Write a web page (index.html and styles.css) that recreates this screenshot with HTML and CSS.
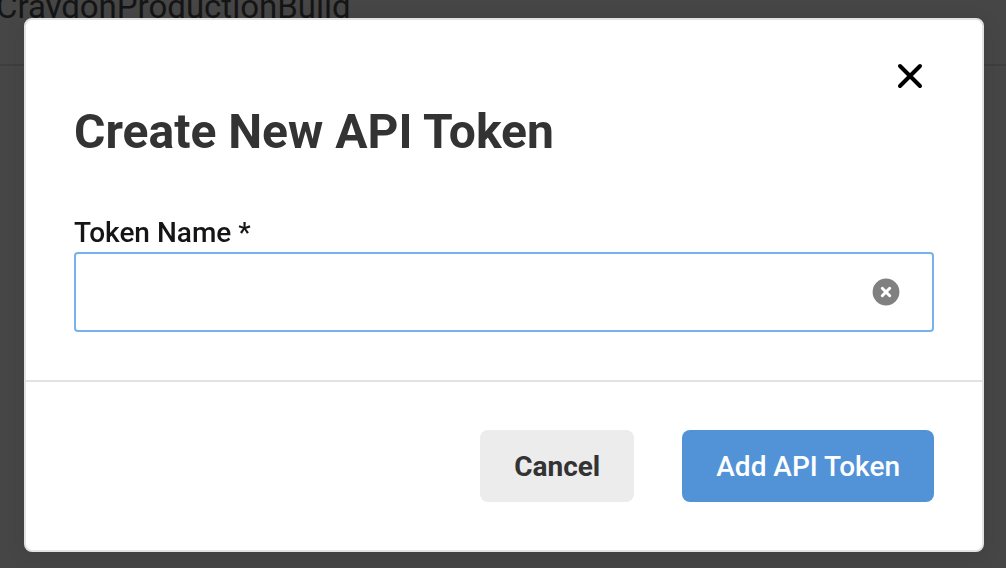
FILE: index.html
```html
<!DOCTYPE html>
<html lang="en">
<head>
<meta charset="utf-8">
<title>Create New API Token</title>
<link rel="stylesheet" href="styles.css">
</head>
<body>
<main class="page">
  <div class="page-row">CraydonProductionBuild</div>
</main>
<div class="overlay">
  <form class="dialog" role="dialog" aria-modal="true" aria-labelledby="dialog-title">
    <div class="dialog-body">
      <button class="close" type="button" aria-label="Close">
        <svg width="28" height="28" viewBox="0 0 28 28" fill="none" stroke="currentColor" stroke-width="4" stroke-linecap="round"><path d="M4 4 24 24M24 4 4 24"/></svg>
      </button>
      <h1 class="title" id="dialog-title">Create New API Token</h1>
      <label class="label" for="token-name">Token Name *</label>
      <div class="field">
        <input class="field-input" id="token-name" type="text" required>
        <button class="clear" type="button" aria-label="Clear token name">
          <svg width="28" height="28" viewBox="0 0 28 28"><circle cx="14" cy="14" r="13.4" fill="#808080"/><path d="M10.3 10.3 17.7 17.7M17.7 10.3 10.3 17.7" stroke="#fff" stroke-width="3" stroke-linecap="round"/></svg>
        </button>
      </div>
    </div>
    <div class="dialog-footer">
      <button class="button cancel" type="button">Cancel</button>
      <button class="button submit" type="submit">Add API Token</button>
    </div>
  </form>
</div>
</body>
</html>
```
FILE: styles.css
```css
* { box-sizing: border-box; }

body {
  margin: 0;
  background: #464646;
  color: #151515;
  font-family: Roboto, "Liberation Sans", sans-serif;
  overflow: hidden;
}

.page-row {
  height: 66px;
  margin: 0 0 0 -4px;
  border-bottom: 2px solid #3e3e3e;
  font-size: 33px;
  line-height: 14px;
  white-space: nowrap;
}

.overlay {
  position: fixed;
  inset: 0;
  padding: 18px 22px 16px 24px;
}

.dialog {
  background: #fff;
  border: 2px solid #e2e2e2;
  border-radius: 8px;
  box-shadow: 0 4px 20px rgba(0, 0, 0, 0.1);
}

.dialog-body {
  display: flex;
  flex-direction: column;
  padding: 42px 48px 48px;
  border-bottom: 2px solid #e2e2e2;
}

.close {
  display: flex;
  align-self: flex-end;
  margin-right: 10px;
  padding: 0;
  border: 0;
  background: none;
  color: #000;
}

.title {
  margin: 14px 0 56px;
  color: #333;
  font-size: 48px;
  font-weight: 700;
  line-height: 56px;
}

.label {
  margin-bottom: 2px;
  font-size: 28px;
  font-weight: 500;
  line-height: 34px;
}

.field {
  display: flex;
  align-items: center;
  height: 80px;
  padding: 0 32px;
  border: 2px solid #77b2ec;
  border-radius: 4px;
}

.field-input {
  flex: 1;
  min-width: 0;
  padding: 0;
  border: 0;
  outline: 0;
  background: none;
  font: inherit;
  font-size: 28px;
}

.clear {
  display: flex;
  padding: 0;
  border: 0;
  background: none;
}

.dialog-footer {
  display: flex;
  justify-content: flex-end;
  gap: 48px;
  padding: 48px;
}

.button {
  height: 72px;
  padding: 2px 34px 0;
  border: 0;
  border-radius: 8px;
  font-family: inherit;
  font-size: 28px;
  line-height: 32px;
}

.cancel {
  background: #ececec;
  color: #333;
  font-weight: 700;
}

.submit {
  background: #5293d8;
  color: #fff;
  font-weight: 500;
}
```
